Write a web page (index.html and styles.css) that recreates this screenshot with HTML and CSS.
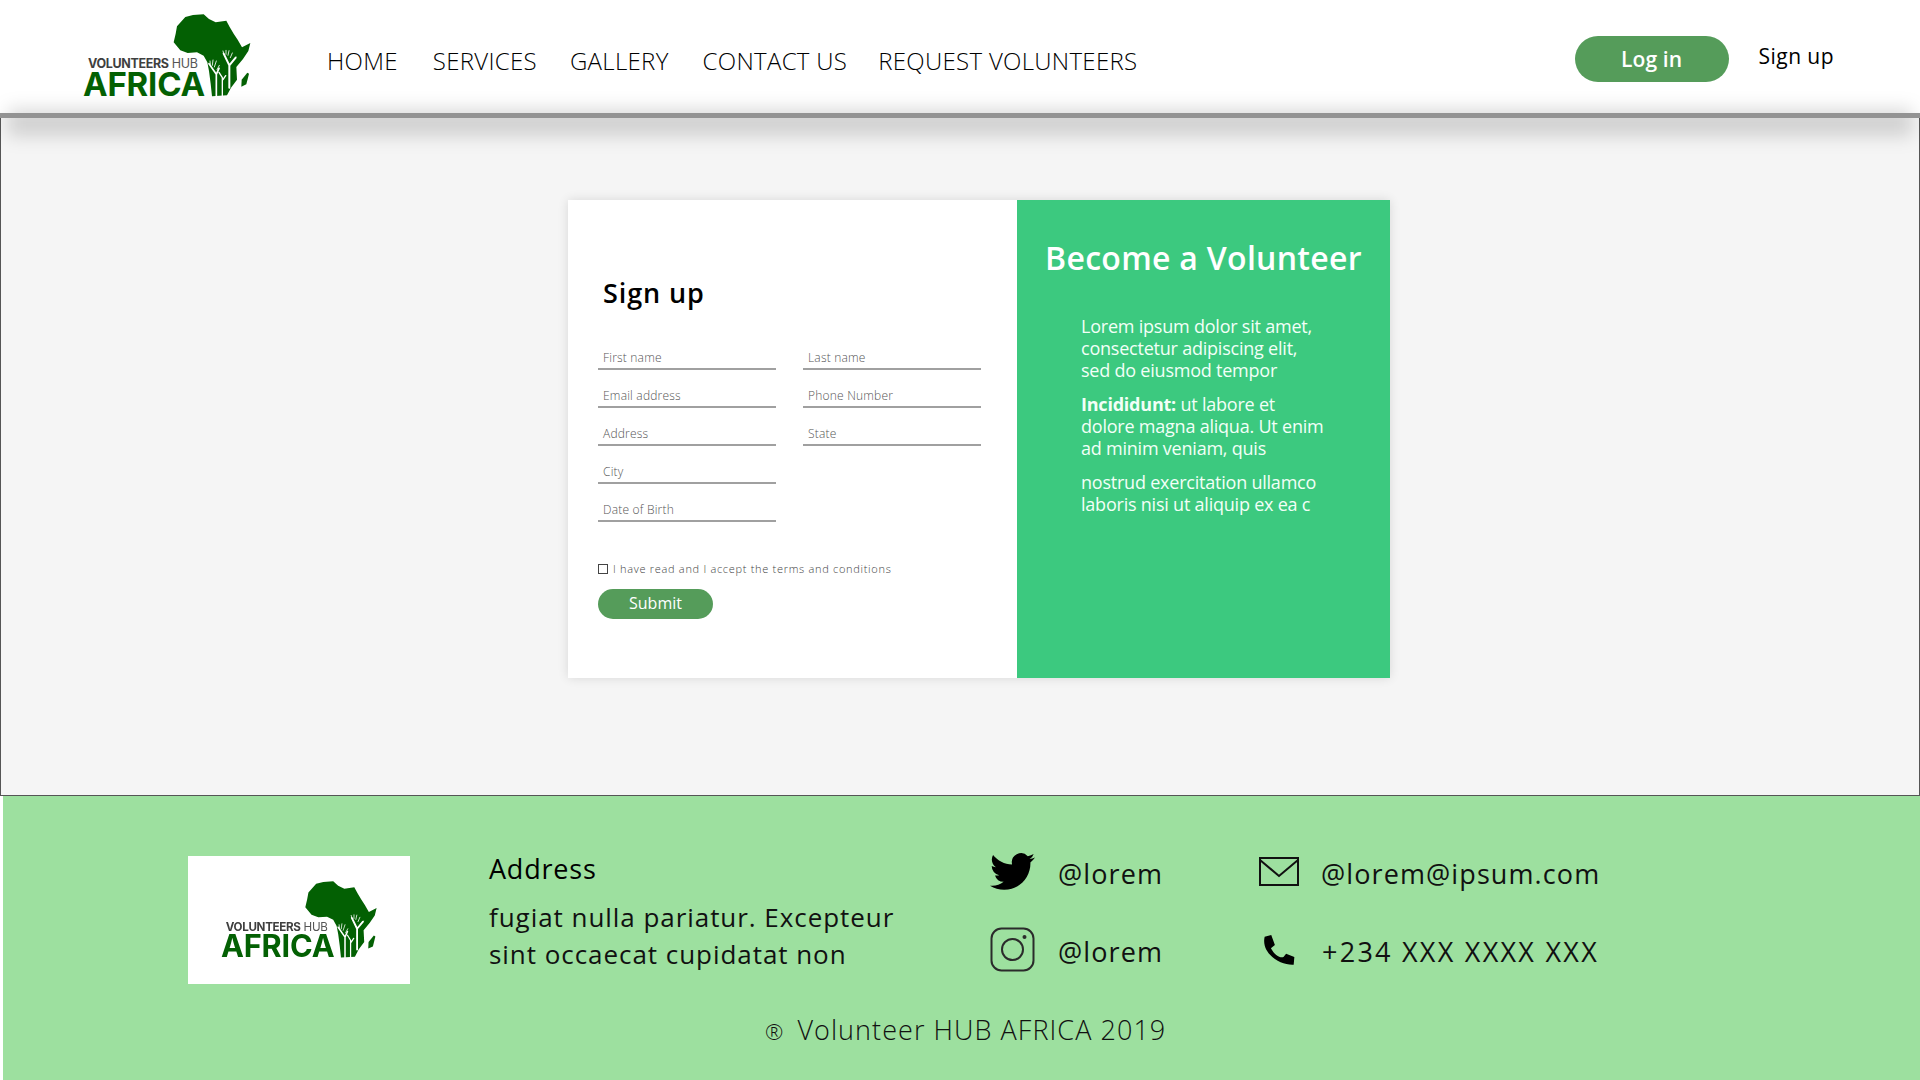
FILE: index.html
```html
<!DOCTYPE html>
<html>
<head>
  <title>Volunteers Hub Africa</title>
  <link rel="stylesheet" href="styles.css">
</head>
<body>
  <svg class="defs" width="0" height="0">
    <symbol id="africa" viewBox="335 35 240 255">
      <path fill="#036003" d="M375 50 L398 44 L430 42 L446 56 L466 66 L498 61 L508 80 L520 100 L532 118 L545 141 L570 128 L564 152 L548 176 L528 200 L530 238 L512 262 L500 285 L455 288 L451 250 L446 212 L441 186 L430 166 L410 156 L382 158 L360 150 L340 126 L346 100 L350 78 Z"/>
      <path fill="#036003" d="M561 217 L566 220 L558 252 L543 259 L544 238 Z"/>
      <g fill="none" stroke="#fff" stroke-linecap="round" stroke-linejoin="round">
        <path stroke-width="6" d="M507 262 L507 195 L490 160 M507 195 L526 172"/>
        <path stroke-width="2.5" d="M490 160 L488 152 M497 162 L497 150 M503 165 L506 151 M510 172 L516 158 M518 180 L527 170"/>
        <path stroke-width="5" d="M468 288 L468 222 L446 190 M468 222 L476 204"/>
        <path stroke-width="2.5" d="M450 192 L449 182 M456 195 L458 179 M462 200 L468 182 M470 208 L477 195"/>
        <path stroke-width="4" d="M486 288 L486 232 L476 216 M488 238 L496 226"/>
      </g>
    </symbol>
  </svg>

  <div class="top">
    <header class="header">
      <div class="logo">
        <svg class="africa"><use href="#africa"/></svg>
        <div class="logo-small"><b>VOLUNTEERS</b> HUB</div>
        <div class="logo-big">AFRICA</div>
      </div>
      <nav class="nav">
        <a href="#">HOME</a>
        <a href="#">SERVICES</a>
        <a href="#">GALLERY</a>
        <a href="#">CONTACT US</a>
        <a href="#">REQUEST VOLUNTEERS</a>
      </nav>
      <div class="auth">
        <a class="btn-login" href="#">Log in</a>
        <a class="link-signup" href="#">Sign up</a>
      </div>
    </header>
    <div class="rule"></div>
  </div>

  <main class="main">
    <div class="card">
      <form class="form">
        <h2>Sign up</h2>
        <div class="fields">
          <label class="field">First name</label>
          <label class="field">Last name</label>
          <label class="field">Email address</label>
          <label class="field">Phone Number</label>
          <label class="field">Address</label>
          <label class="field">State</label>
          <label class="field">City</label>
          <label class="field field-first">Date of Birth</label>
        </div>
        <div class="terms">
          <span class="check"></span>
          <span>I have read and I accept the terms and conditions</span>
        </div>
        <button class="submit" type="button">Submit</button>
      </form>
      <aside class="side">
        <h2>Become a Volunteer</h2>
        <p>Lorem ipsum dolor sit amet,<br>consectetur adipiscing elit,<br>sed do eiusmod tempor</p>
        <p><b>Incididunt:</b> ut labore et<br>dolore magna aliqua. Ut enim<br>ad minim veniam, quis</p>
        <p>nostrud exercitation ullamco<br>laboris nisi ut aliquip ex ea c</p>
      </aside>
    </div>
  </main>

  <footer class="footer">
    <div class="footer-row">
      <div class="footer-logo">
        <div class="logo">
          <svg class="africa"><use href="#africa"/></svg>
          <div class="logo-small"><b>VOLUNTEERS</b> HUB</div>
          <div class="logo-big">AFRICA</div>
        </div>
      </div>
      <div class="address">
        <h3>Address</h3>
        <p>fugiat nulla pariatur. Excepteur<br>sint occaecat cupidatat non</p>
      </div>
      <div class="contacts">
        <div class="contact">
          <svg class="icon" viewBox="0 0 24 24"><path fill="#000" d="M23.95 4.57a10 10 0 0 1-2.82.77 4.96 4.96 0 0 0 2.16-2.72c-.95.55-2 .96-3.13 1.18a4.92 4.92 0 0 0-8.38 4.48C7.69 8.1 4.07 6.13 1.64 3.16a4.82 4.82 0 0 0-.67 2.48c0 1.71.87 3.21 2.19 4.1a4.9 4.9 0 0 1-2.23-.62v.06a4.92 4.92 0 0 0 3.95 4.83 5 5 0 0 1-2.21.08 4.94 4.94 0 0 0 4.6 3.42 9.87 9.87 0 0 1-6.1 2.1c-.39 0-.78-.02-1.17-.06a14 14 0 0 0 7.56 2.2c9.05 0 14-7.49 14-13.98 0-.21 0-.42-.02-.63A9.94 9.94 0 0 0 24 4.59z"/></svg>
          <span>@lorem</span>
        </div>
        <div class="contact">
          <svg class="icon" viewBox="0 0 45 45" fill="none" stroke="#2b2b2b" stroke-width="2"><rect x="1.5" y="1.5" width="42" height="42" rx="10"/><circle cx="22.5" cy="22.5" r="10.5"/><circle cx="34.5" cy="10" r="2" fill="#2b2b2b" stroke="none"/></svg>
          <span>@lorem</span>
        </div>
        <div class="contact contact-wide">
          <svg class="icon icon-mail" viewBox="0 0 40 29" fill="none" stroke="#111" stroke-width="2"><rect x="1" y="1" width="38" height="27"/><path d="M1 3 L20 19 L39 3"/></svg>
          <span>@lorem@ipsum.com</span>
        </div>
        <div class="contact contact-wide">
          <svg class="icon icon-phone" viewBox="95 312 100 100"><path fill="#000" d="M100 320 L120 315 L131 345 L119 355 C130 375 145 385 157 382 L165 372 L190 382 L188 405 C150 408 88 372 100 320 Z"/></svg>
          <span class="phone">+234 XXX XXXX XXX</span>
        </div>
      </div>
    </div>
    <div class="copy"><span class="reg">®</span> Volunteer HUB AFRICA 2019</div>
  </footer>
</body>
</html>
```

FILE: styles.css
```css
html, body {
  height: 100%;
  margin: 0;
  padding: 0;
  font-family: "Open Sans", "Noto Sans", sans-serif;
  background: #fff;
  color: #000;
  overflow: hidden;
}

a {
  color: inherit;
  text-decoration: none;
}

.defs {
  display: block;
  height: 0;
}

/* header */
.top {
  position: relative;
  z-index: 2;
}

.header {
  height: 113px;
  display: flex;
  align-items: flex-start;
  box-sizing: border-box;
  padding-left: 83px;
}

.rule {
  position: relative;
  height: 5px;
  background: #939393;
}

.rule::after {
  content: "";
  position: absolute;
  z-index: -1;
  left: 8px;
  right: 8px;
  top: -4px;
  height: 27px;
  background: rgba(0, 0, 0, 0.15);
  filter: blur(9px);
}

.logo {
  position: relative;
  width: 167px;
  height: 96px;
  flex: none;
}

.africa {
  position: absolute;
  left: 89px;
  top: 12px;
  width: 80px;
  height: 85px;
}

.logo-small {
  position: absolute;
  left: 5px;
  top: 58px;
  font-family: Inter, sans-serif;
  font-size: 12.5px;
  line-height: 12px;
  letter-spacing: -0.35px;
  color: #555;
  white-space: nowrap;
}

.logo-small b {
  color: #3f3f3f;
  font-weight: 700;
}

.logo-big {
  position: absolute;
  left: 0;
  top: 72px;
  font-family: Inter, sans-serif;
  font-size: 33px;
  line-height: 24px;
  font-weight: 700;
  letter-spacing: -0.2px;
  color: #036003;
}

.nav {
  display: flex;
  margin-left: 77px;
  margin-top: 44px;
  font-size: 24px;
  line-height: 33px;
  font-weight: 300;
  letter-spacing: 0.3px;
  color: #000;
}

.nav a:nth-child(1) { margin-right: 35px; }
.nav a:nth-child(2) { margin-right: 33px; }
.nav a:nth-child(3) { margin-right: 34px; }
.nav a:nth-child(4) { margin-right: 31px; }

.auth {
  margin-left: auto;
  margin-right: 86px;
  margin-top: 36px;
  display: flex;
}

.btn-login {
  width: 154px;
  height: 46px;
  border-radius: 23px;
  background: #559c5a;
  color: #fff;
  text-align: center;
  font-size: 21px;
  line-height: 46px;
  font-weight: 600;
  letter-spacing: 0.1px;
}

.link-signup {
  margin-left: 30px;
  font-size: 21px;
  line-height: 40px;
  font-weight: 500;
  letter-spacing: 0.45px;
}

/* main */
.main {
  height: 678px;
  box-sizing: border-box;
  background: #f5f5f5;
  border: 1px solid #555;
  border-top: 0;
  padding: 82px 0 0 567px;
  display: flex;
}

.card {
  width: 822px;
  height: 478px;
  display: flex;
  box-shadow: 0 0 10px rgba(0, 0, 0, 0.12);
}

.form {
  width: 449px;
  box-sizing: border-box;
  background: #fff;
  padding: 75px 36px 0 30px;
}

.form h2 {
  margin: 0 0 0 5px;
  font-size: 27px;
  line-height: 36px;
  font-weight: 600;
  letter-spacing: 0.9px;
}

.fields {
  margin-top: 33px;
  display: grid;
  grid-template-columns: 178px 178px;
  column-gap: 27px;
  row-gap: 12px;
}

.field {
  height: 26px;
  box-sizing: border-box;
  border-bottom: 2px solid #a0a0a0;
  padding-left: 5px;
  font-size: 12px;
  line-height: 27px;
  font-weight: 300;
  letter-spacing: 0.2px;
  color: #555;
}

.field-first {
  grid-column: 1;
}

.terms {
  margin-top: 39px;
  display: flex;
  align-items: center;
  gap: 5px;
  font-size: 11px;
  line-height: 16px;
  letter-spacing: 0.7px;
  font-weight: 300;
  color: #444;
}

.check {
  width: 8px;
  height: 8px;
  border: 1px solid #444;
  margin-top: -1px;
}

.submit {
  display: block;
  margin-top: 12px;
  width: 115px;
  height: 30px;
  border: 0;
  border-radius: 15px;
  background: #559c5a;
  color: #fff;
  font-family: inherit;
  font-size: 16px;
  line-height: 28px;
  padding: 0 0 2px;
}

.side {
  width: 373px;
  box-sizing: border-box;
  background: #3cc97f;
  color: #f2fff7;
  padding: 35px 0 0 64px;
}

.side h2 {
  margin: 0 0 34px -36px;
  font-size: 32px;
  line-height: 46px;
  font-weight: 600;
  color: #fff;
  letter-spacing: 0.3px;
  white-space: nowrap;
}

.side p {
  margin: 0 0 12px;
  font-size: 18px;
  line-height: 22px;
  letter-spacing: -0.22px;
}

/* footer */
.footer {
  height: 284px;
  margin-left: 3px;
  background: #9de09f;
  color: #111;
}

.footer-row {
  display: flex;
  padding: 60px 0 0 185px;
}

.footer-logo {
  width: 222px;
  height: 128px;
  background: #fff;
  flex: none;
  padding: 26px 0 0 33px;
  box-sizing: border-box;
}

.footer-logo .logo {
  transform: scale(0.93);
  transform-origin: 0 0;
  margin-top: -14px;
}

.address {
  margin-left: 79px;
  width: 501px;
  flex: none;
}

.address h3 {
  margin: -7px 0 0;
  font-size: 27px;
  line-height: 40px;
  font-weight: 400;
  letter-spacing: 0.8px;
  color: #000;
}

.address p {
  margin: 10px 0 0;
  font-size: 26px;
  line-height: 37px;
  letter-spacing: 0.95px;
}

.contacts {
  display: grid;
  grid-template-columns: 269px auto;
  grid-auto-flow: column;
  grid-template-rows: 78px 78px;
  margin-top: -22px;
}

.contact {
  display: flex;
  align-items: center;
  font-size: 27px;
  letter-spacing: 1.1px;
}

.icon {
  width: 45px;
  height: 45px;
  margin: -3px 23px 0 0;
  flex: none;
}

.icon-mail {
  width: 40px;
  height: 29px;
  margin: -3px 22px 0 0;
}

.icon-phone {
  width: 33px;
  height: 33px;
  margin: -2px 26px 0 4px;
}

.phone {
  letter-spacing: 2.25px;
}

.copy {
  margin-top: 20px;
  margin-left: 762px;
  font-size: 27px;
  line-height: 40px;
  font-weight: 300;
  letter-spacing: 1.05px;
}

.reg {
  font-size: 22px;
  margin-right: 5px;
}
```
